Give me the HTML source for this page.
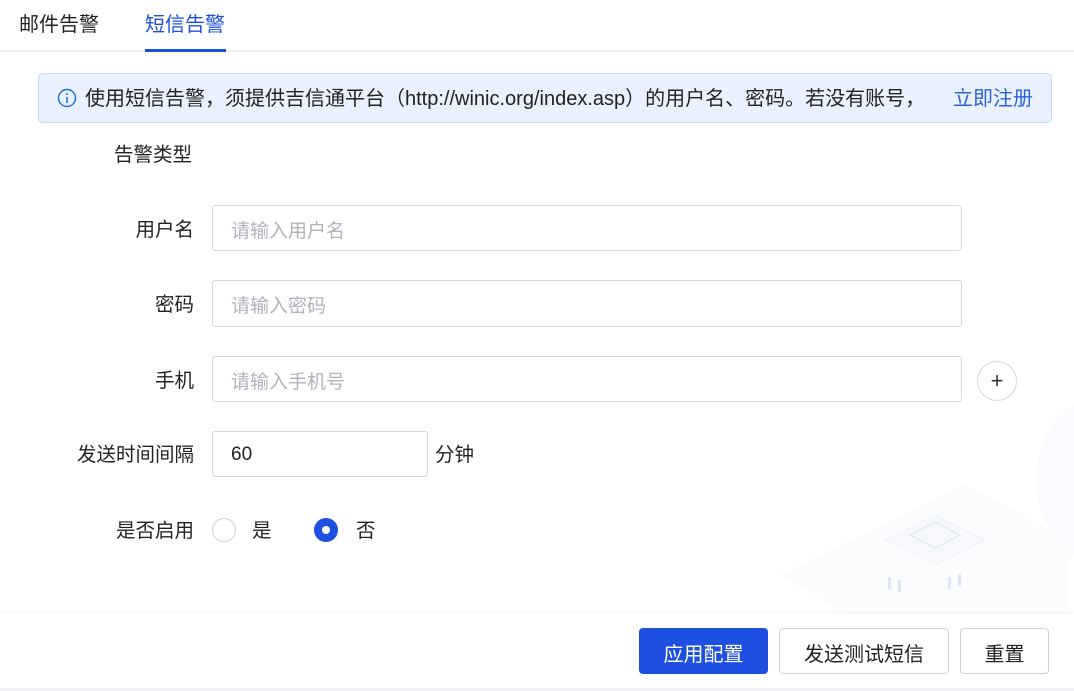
<!DOCTYPE html><html><head><meta charset="utf-8"><style>
*{box-sizing:border-box;margin:0;padding:0}
body{width:1074px;height:691px;background:#fff;font-family:"Liberation Sans","Noto Sans CJK SC",sans-serif;color:#222;position:relative;overflow:hidden;font-size:19.5px}
.a{position:absolute}
.tab{top:11px;font-size:20px;line-height:28px}
.lbl{width:194px;text-align:right;left:0;font-size:19.5px;line-height:24px}
.inp{border:1px solid #d6d8de;border-radius:3px;background:#fff;padding-left:18px;color:#b0b3ba;font-size:19px;display:flex;align-items:center;padding-top:2px}
.btn{border:1px solid #cfd2d9;border-radius:4px;display:flex;align-items:center;justify-content:center;font-size:20px;height:46px;top:628px;background:#fff;padding-top:2px}
</style></head><body>
<div class="a tab" style="left:19px">邮件告警</div>
<div class="a tab" style="left:145px;color:#1d4fe0">短信告警</div>
<div class="a" style="left:0;top:50px;width:1074px;height:2px;background:#eef0f3"></div>
<div class="a" style="left:145px;top:49px;width:81px;height:3px;background:#1d4fe0"></div>
<div class="a" style="left:38px;top:73px;width:1014px;height:50px;background:#e8f1fd;border:1px solid #c5dafa;border-radius:5px"></div>
<svg class="a" style="left:57px;top:88px" width="20" height="20" viewBox="0 0 20 20"><circle cx="10" cy="10" r="8.5" fill="none" stroke="#1d6ee0" stroke-width="1.4"/><circle cx="10" cy="6" r="1" fill="#1d6ee0"/><path d="M10 9v6" stroke="#1d6ee0" stroke-width="1.5"/></svg>
<div class="a" style="left:85px;top:86px;line-height:26px;white-space:nowrap;font-size:20px">使用短信告警，须提供吉信通平台（http://winic.org/index.asp）的用户名、密码。若没有账号，</div>
<div class="a" style="left:953px;top:86px;line-height:26px;white-space:nowrap;font-size:20px;color:#2a63d8">立即注册</div>
<div class="a" style="left:114px;top:143px;line-height:24px">告警类型</div>
<div class="a lbl" style="top:218px">用户名</div>
<div class="a inp" style="left:212px;top:205px;width:750px;height:46px">请输入用户名</div>
<div class="a lbl" style="top:293px">密码</div>
<div class="a inp" style="left:212px;top:280px;width:750px;height:47px">请输入密码</div>
<div class="a lbl" style="top:369px">手机</div>
<div class="a inp" style="left:212px;top:356px;width:750px;height:46px">请输入手机号</div>
<div class="a" style="left:977px;top:361px;width:40px;height:40px;border:1px solid #d6d8de;border-radius:50%;text-align:center;line-height:37px;font-size:22px;color:#333">+</div>
<div class="a lbl" style="top:443px">发送时间间隔</div>
<div class="a inp" style="left:212px;top:431px;width:216px;height:46px;color:#222">60</div>
<div class="a" style="left:435px;top:443px;line-height:24px">分钟</div>
<div class="a lbl" style="top:519px">是否启用</div>
<div class="a" style="left:212px;top:518px;width:24px;height:24px;border:1px solid #cfd2d9;border-radius:50%"></div>
<div class="a" style="left:252px;top:519px;line-height:24px">是</div>
<div class="a" style="left:314px;top:518px;width:24px;height:24px;border-radius:50%;background:#1d4fe0"><div style="margin:8px;width:8px;height:8px;border-radius:50%;background:#fff"></div></div>
<div class="a" style="left:356px;top:519px;line-height:24px">否</div>
<div class="a" style="left:1036px;top:400px;width:120px;height:160px;border-radius:50%;background:#fafbfe"></div>
<svg class="a" style="left:770px;top:480px" width="300" height="135"><polygon points="10,95 195,5 300,60 300,135 80,135" fill="#fbfcfe"/><polygon points="115,60 165,35 215,60 165,85" fill="#f6f8fb" stroke="#eef1f6"/><polygon points="140,55 165,42 190,55 165,68" fill="none" stroke="#dbe5f8"/><rect x="118" y="97" width="3" height="12" fill="#dde6f8"/><rect x="128" y="100" width="3" height="12" fill="#dde6f8"/><rect x="178" y="97" width="3" height="12" fill="#dde6f8"/><rect x="188" y="94" width="3" height="12" fill="#dde6f8"/></svg>
<div class="a" style="left:0;top:614px;width:1074px;height:77px;background:#fff;box-shadow:0 -2px 4px rgba(0,0,0,.04)"></div>
<div class="a btn" style="left:639px;width:129px;background:#1d4fe0;border-color:#1d4fe0;color:#fff">应用配置</div>
<div class="a btn" style="left:779px;width:170px">发送测试短信</div>
<div class="a btn" style="left:960px;width:89px">重置</div>
<div class="a" style="left:0;top:688px;width:1074px;height:3px;background:#f0f1f4"></div>
</body></html>
